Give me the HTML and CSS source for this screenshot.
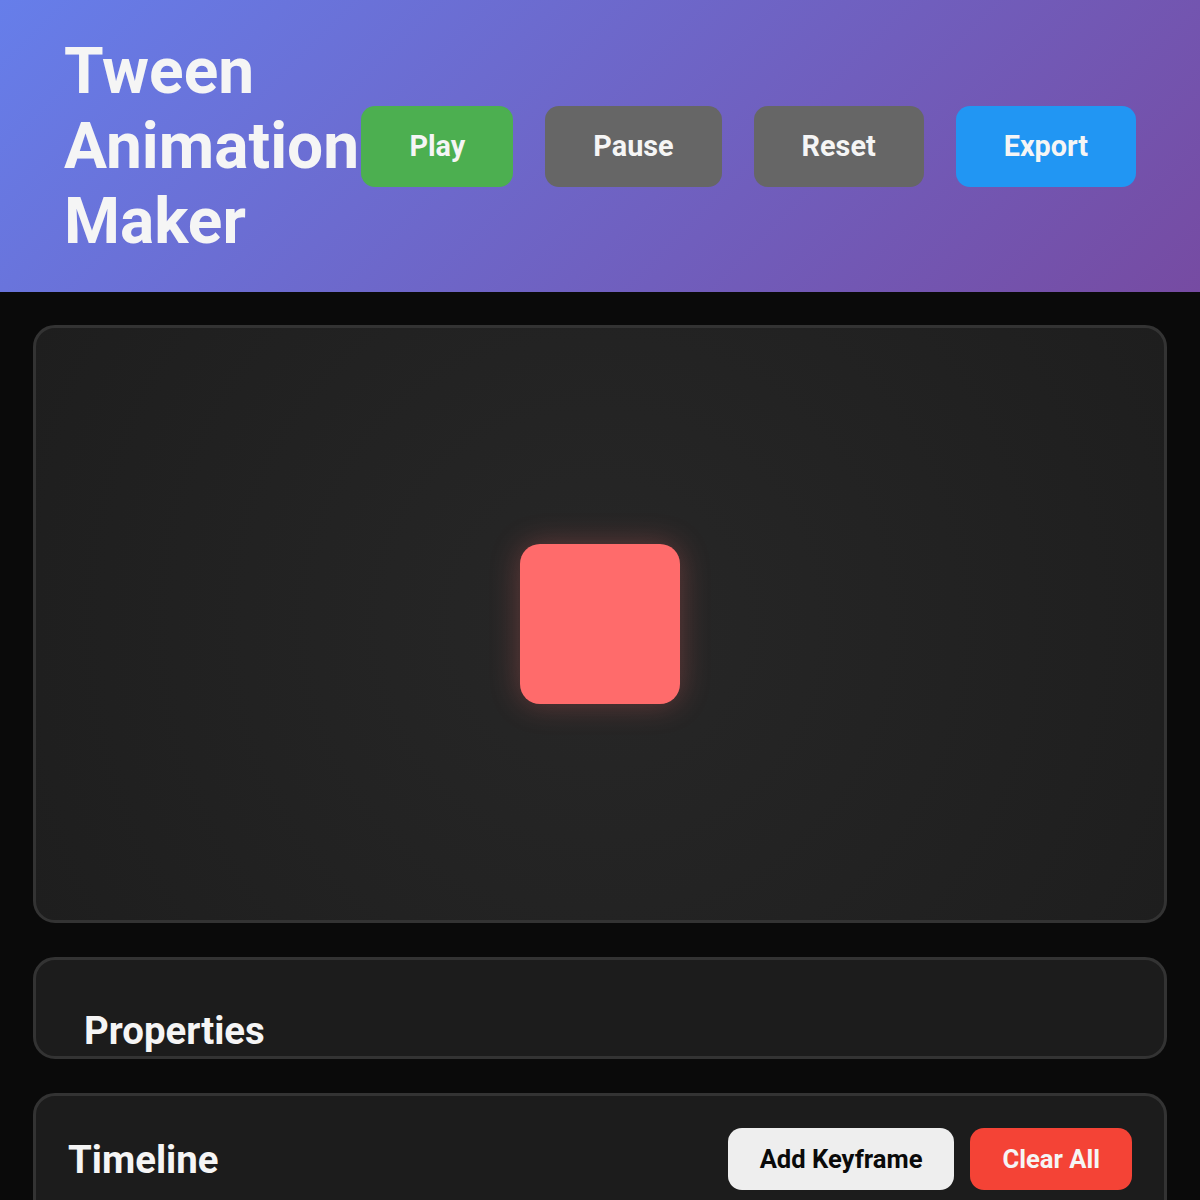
FILE: index.html
```html
<!DOCTYPE html>
<html lang="en">

<head>
    <meta charset="UTF-8" />
    <meta name="viewport" content="width=device-width, initial-scale=1" />
    <title>Tween Animation Maker</title>
    <link rel="stylesheet" href="styles.css">
</head>

<body>

    <!-- Header -->
    <header class="app-header">
        <h1 class="app-title">Tween Animation Maker</h1>
        <div class="controls">
            <button class="btn btn-play">Play</button>
            <button class="btn btn-gray">Pause</button>
            <button class="btn btn-gray">Reset</button>
            <button class="btn btn-export">Export</button>
        </div>
    </header>

    <!-- Main -->
    <main class="workspace">
        <section class="stage">
            <div class="shape"></div>
        </section>

        <section class="panel properties">
            <h2>Properties</h2>
        </section>

        <section class="panel timeline">
            <div class="timeline-head">
                <h2>Timeline</h2>
                <div class="timeline-actions">
                    <button class="small-btn btn-light">Add Keyframe</button>
                    <button class="small-btn btn-danger">Clear All</button>
                </div>
            </div>
        </section>
    </main>

</body>

</html>
```

FILE: styles.css
```css
* {
    margin: 0;
    padding: 0;
    box-sizing: border-box;
    font-family: Roboto, 'Liberation Sans', sans-serif;
}

body {
    background-color: #0a0a0a;
    color: #f5f5f5;
}

/* Header */
.app-header {
    display: flex;
    justify-content: space-between;
    align-items: center;
    height: 292px;
    padding: 1px 64px 0;
    background: linear-gradient(135deg, #667eea 0%, #764ba2 100%);
}

.app-title {
    font-size: 64px;
    font-weight: 700;
    line-height: 75px;
    color: #f5f5f5;
}

.controls {
    display: flex;
    gap: 32px;
    flex-shrink: 0;
}

.btn {
    border: none;
    border-radius: 14px;
    padding: 24px 48px;
    font-size: 28.8px;
    font-weight: 700;
    line-height: 33px;
    color: #f5f5f5;
    cursor: pointer;
}

.btn-play {
    background-color: #4caf50;
}

.btn-gray {
    background-color: #666666;
}

.btn-export {
    background-color: #2196f3;
}

/* Workspace */
.workspace {
    padding: 33px 33px;
    display: flex;
    flex-direction: column;
    gap: 34px;
}

.stage {
    height: 598px;
    border: 3px solid #333333;
    border-radius: 22px;
    background: radial-gradient(circle at center, #272727 0%, #1e1e1e 100%);
    display: flex;
    align-items: center;
    justify-content: center;
}

.shape {
    width: 160px;
    height: 160px;
    border-radius: 20px;
    background-color: #ff6b6b;
    box-shadow: 0 0 30px rgba(255, 107, 107, 0.3);
}

.panel {
    border: 3px solid #333333;
    border-radius: 22px;
    background-color: #1c1c1c;
}

.panel h2 {
    font-size: 38.4px;
    font-weight: 700;
    color: #f5f5f5;
}

.properties {
    height: 102px;
    overflow: hidden;
    padding: 48px 48px 0;
}

.timeline {
    padding: 32px;
    height: 200px;
}

.timeline-head {
    display: flex;
    justify-content: space-between;
    align-items: center;
}

.timeline-actions {
    display: flex;
    gap: 16px;
}

.small-btn {
    border: none;
    border-radius: 14px;
    padding: 16px 32px;
    font-size: 25.6px;
    font-weight: 700;
    line-height: 30px;
    cursor: pointer;
}

.btn-light {
    background-color: #eeeeee;
    color: #0a0a0a;
}

.btn-danger {
    background-color: #f44336;
    color: #f5f5f5;
}
```
